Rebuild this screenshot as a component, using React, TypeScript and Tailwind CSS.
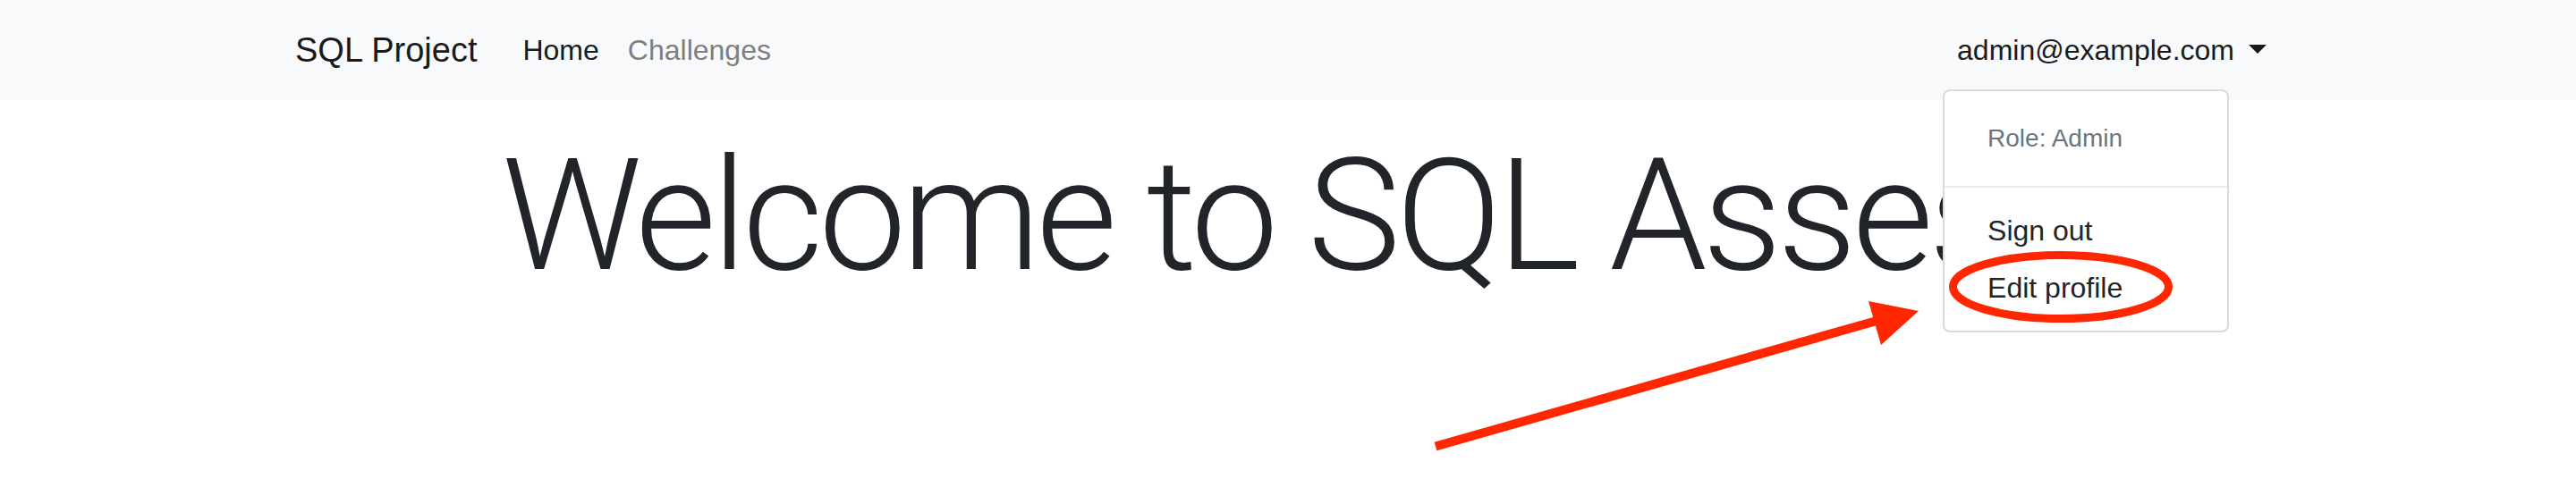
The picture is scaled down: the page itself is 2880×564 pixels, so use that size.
import React from "react";

export default function App() {
  return (
    <div className="relative h-[564px] w-[2880px] overflow-hidden bg-white font-['Liberation_Sans',Arial,sans-serif]">
      <nav className="bg-[#f8f9fa]">
        <div className="mx-auto flex w-[2280px] items-center px-[30px] py-[16px]">
          <a className="mr-[35px] py-[10px] text-[38px] leading-[60px] text-[#1a1a1a]">SQL Project</a>
          <ul className="flex items-center">
            <li>
              <a className="block px-[16px] py-[16px] text-[32px] leading-[48px] text-[#1a1a1a]">Home</a>
            </li>
            <li>
              <a className="block px-[16px] py-[16px] text-[32px] leading-[48px] text-[#7d7e7f]">Challenges</a>
            </li>
          </ul>
          <ul className="ml-auto flex items-center">
            <li className="relative">
              <a className="flex items-center px-[16px] py-[16px] text-[32px] leading-[48px] text-[#1a1a1a]">
                <span>admin@example.com</span>
                <span className="mb-[2px] ml-[16px] h-0 w-0 border-x-[10px] border-t-[10px] border-x-transparent border-t-[#1a1a1a]" />
              </a>
              <div className="absolute left-0 top-[calc(100%+4px)] z-10 w-[320px] rounded-[8px] border-2 border-[#d9d9d9] bg-white py-[16px]">
                <div className="px-[48px] py-[16px] text-[28px] leading-[42px] text-[#6c757d]">Role: Admin</div>
                <div className="my-[16px] h-0 border-t-2 border-[#e9ecef]" />
                <a className="block px-[48px] py-[8px] text-[32px] leading-[48px] text-[#212529]">Sign out</a>
                <a className="block px-[48px] py-[8px] text-[32px] leading-[48px] text-[#212529]">Edit profile</a>
              </div>
            </li>
          </ul>
        </div>
      </nav>
      <main className="mx-auto w-[2280px] px-[30px]">
        <h1 className="mt-[25px] whitespace-nowrap pl-[231px] font-['Roboto',sans-serif] text-[175px] font-light leading-[210px] tracking-[-5px] text-[#212529]">
          Welcome to SQL Assessor
        </h1>
      </main>
      <svg
        className="pointer-events-none absolute left-0 top-0 z-20"
        width="2880"
        height="564"
        viewBox="0 0 2880 564"
      >
        <ellipse cx="2304" cy="321" rx="120.5" ry="35.5" fill="none" stroke="#ff2600" strokeWidth="9" />
        <line x1="1605" y1="499.5" x2="2098" y2="359" stroke="#ff2600" strokeWidth="10" />
        <polygon points="2089,337 2145,348 2103,386" fill="#ff2600" />
      </svg>
    </div>
  );
}
